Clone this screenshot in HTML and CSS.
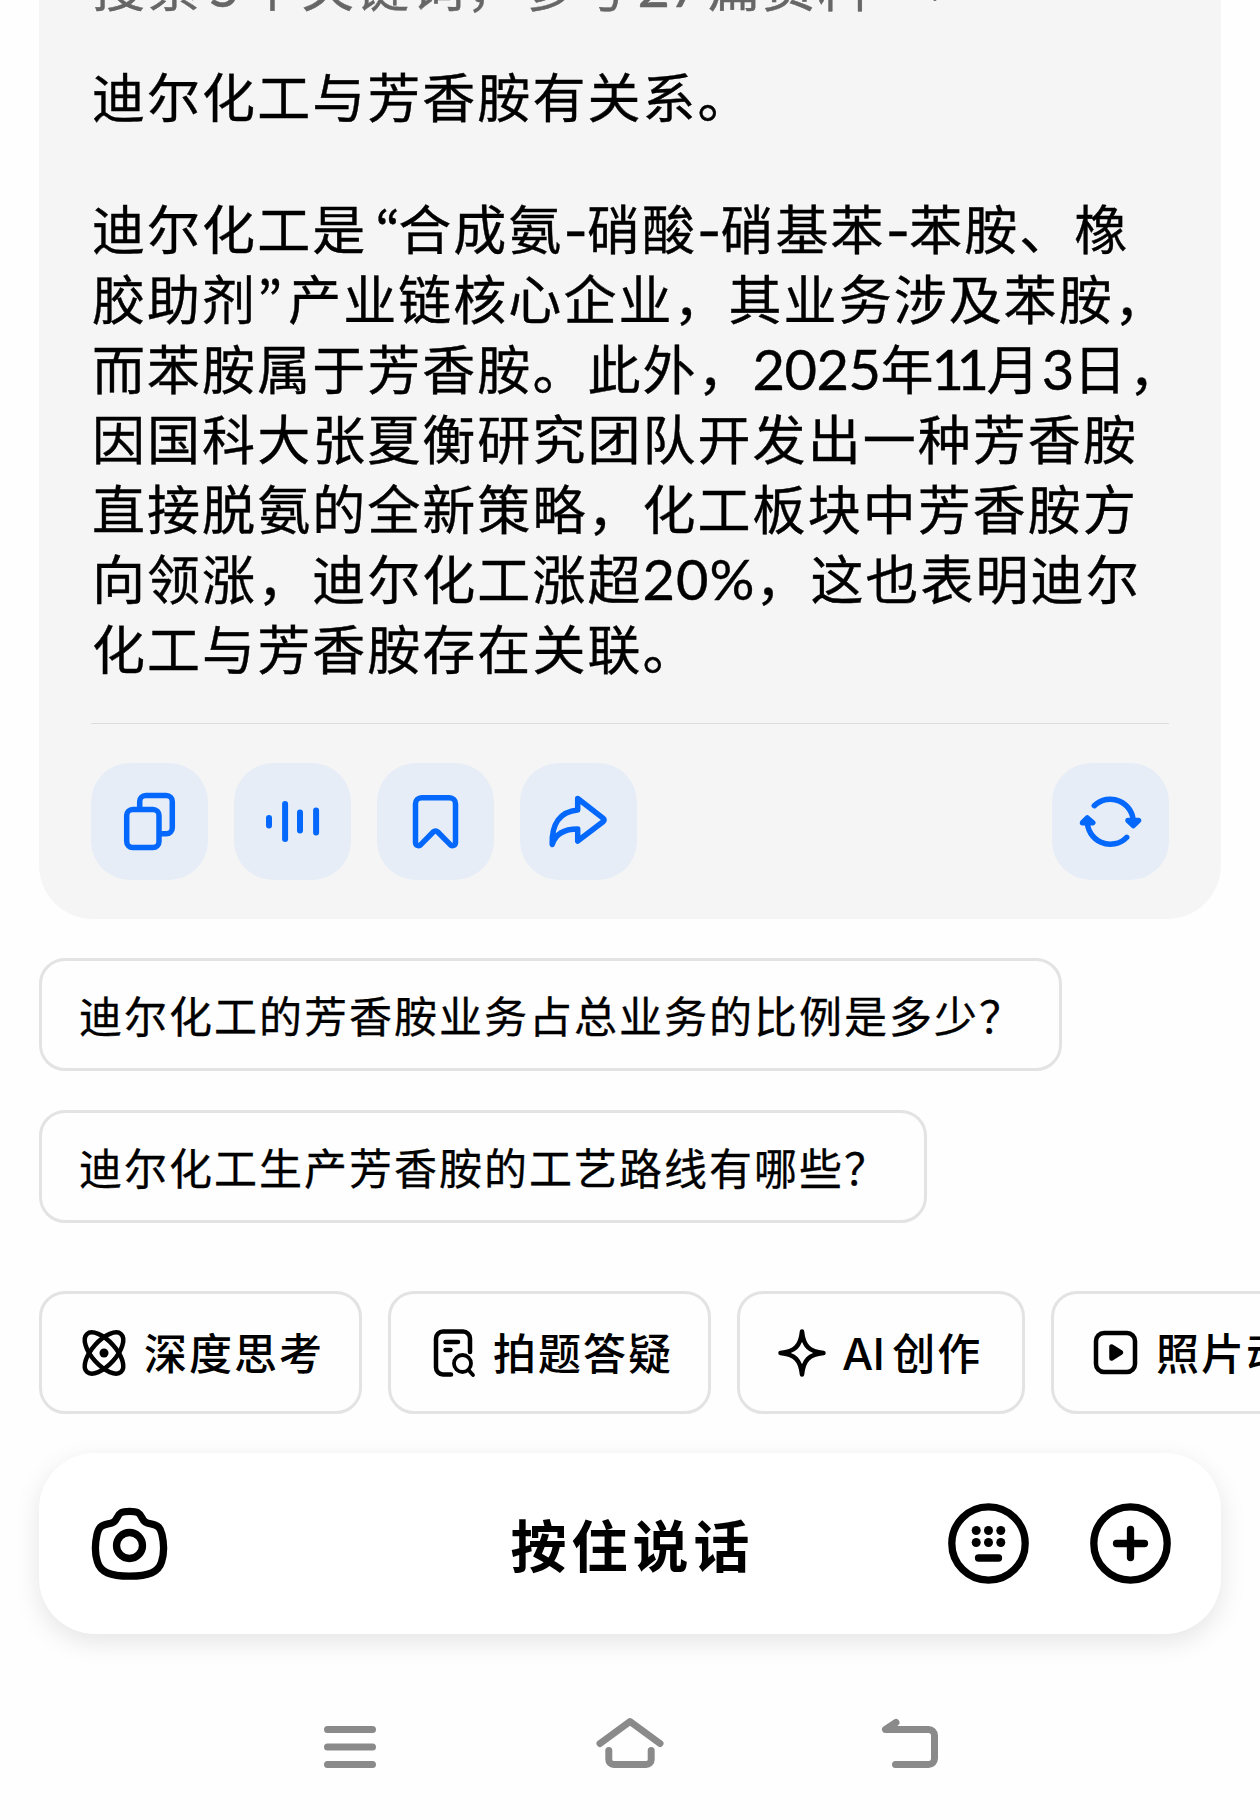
FILE: index.html
```html
<!DOCTYPE html>
<html lang="zh-CN">
<head>
	<meta charset="utf-8">
	<title>AI 对话</title>
	<link rel="stylesheet" href="styles.css">
</head>
<body>
	<div class="screen">
		<div class="answer">
			<div class="sources">
				<span>搜索<span class="num">5</span>个关键词，参考<span class="num">27</span>篇资料</span>
				<svg class="chevron" width="22" height="36" viewBox="0 0 22 36"><path d="M5 5l12 13L5 31"/></svg>
			</div>
			<p>迪尔化工与芳香胺有关系。</p>
			<p>
				<span class="line">迪尔化工是<span class="quote open">“</span>合成氨<span class="dash">-</span>硝酸<span class="dash">-</span>硝基苯<span class="dash">-</span>苯胺、橡</span>
				<span class="line">胶助剂<span class="quote">”</span>产业链核心企业，其业务涉及苯胺，</span>
				<span class="line">而苯胺属于芳香胺。此外，<span class="num">2025</span>年<span class="num ones">11</span>月<span class="num">3</span>日，</span>
				<span class="line">因国科大张夏衡研究团队开发出一种芳香胺</span>
				<span class="line">直接脱氨的全新策略，化工板块中芳香胺方</span>
				<span class="line">向领涨，迪尔化工涨超<span class="num percent">20%</span>，这也表明迪尔</span>
				<span class="line">化工与芳香胺存在关联。</span>
			</p>
			<div class="actions">
				<button>
					<svg viewBox="0 0 117 117"><rect x="35.7" y="46.5" width="32.3" height="38" rx="6"/><path d="M48.7 46v-7.5a6 6 0 0 1 6-6h20.6a6 6 0 0 1 6 6v26.3a6 6 0 0 1-6 6H69"/></svg>
				</button>
				<button>
					<svg class="wave" viewBox="0 0 117 117"><path d="M35 55v7.5M51.100 41v35M66 49.500v18M82.100 47.500v22"/></svg>
				</button>
				<button>
					<svg viewBox="0 0 117 117"><path d="M44.500 34.700h28a6 6 0 0 1 6 6v38.500c0 3.500-3.500 4.500-5.500 2.200L60.800 69c-1.400-1.400-3.200-1.400-4.600 0L44 81.400c-2 2.300-5.500 1.300-5.500-2.200V40.700a6 6 0 0 1 6-6z"/></svg>
				</button>
				<button>
					<svg viewBox="0 0 117 117"><path d="M57.700 35.500L83 55.200q2.200 1.800 0 3.600L57.700 78V66C47 66 36 69 32.200 81.500 31.500 61 40 48.500 57.700 47z"/></svg>
				</button>
				<button class="refresh">
					<svg viewBox="0 0 117 117"><path d="M42.300 42.700A23 23 0 0 1 81.300 60M74.700 74.300A23 23 0 0 1 35.300 57"/><path class="solid" d="M76 57.500l5.300 5L86.500 57.500zM30.500 59.800l4.800-4.800L40.800 59.800z"/></svg>
				</button>
			</div>
		</div>

		<div class="suggestions">
			<div class="suggestion">迪尔化工的芳香胺业务占总业务的比例是多少？</div>
			<div class="suggestion">迪尔化工生产芳香胺的工艺路线有哪些？</div>
		</div>

		<div class="tools">
			<div class="tool">
				<svg width="50" height="50" viewBox="0 0 50 50"><ellipse cx="25" cy="25" rx="12" ry="25.500" transform="rotate(42 25 25)"/><ellipse cx="25" cy="25" rx="12" ry="25.500" transform="rotate(-42 25 25)"/><circle class="dot" cx="25" cy="25" r="4.500"/></svg>
				<span>深度思考</span>
			</div>
			<div class="tool">
				<svg width="50" height="50" viewBox="0 0 50 50"><path d="M23 46.500h-8a7 7 0 0 1-7-7v-29a7 7 0 0 1 7-7h20a7 7 0 0 1 7 7V24M17.500 14h12.500M17.500 22h5"/><circle cx="34.500" cy="35.500" r="8.500" stroke-width="3.800"/><path d="M40.500 42l4.500 5" stroke-width="3.800"/></svg>
				<span>拍题答疑</span>
			</div>
			<div class="tool ai">
				<svg width="50" height="50" viewBox="0 0 50 50"><path d="M25 3.500C26.500 18 32 23.500 46.500 25 32 26.500 26.500 32 25 46.500 23.500 32 18 26.500 3.500 25 18 23.500 23.500 18 25 3.500z"/></svg>
				<span><span class="latin">AI</span>创作</span>
			</div>
			<div class="tool">
				<svg width="50" height="50" viewBox="0 0 50 50"><rect x="5" y="5" width="39" height="39" rx="8"/><path class="fill" d="M20.500 18.500v12L30 24.500z"/></svg>
				<span>照片动起来</span>
			</div>
		</div>

		<div class="voice-bar">
			<svg class="camera" width="77" height="81" viewBox="0 0 77 81"><path d="M38.500 8.300c8 0 10 1.500 12.200 6 2.300 4.500 4 5.700 9.300 6.500 7.500 1.200 9.500 4.500 11 10.700 2 9 2 20-.5 27.500C67.500 69 58 73.200 38.500 73.200S9.500 69 6.500 59C4 51.500 4 40.500 6 31.500c1.500-6.200 3.500-9.500 11-10.700 5.300-.8 7-2 9.300-6.500 2.200-4.500 4.200-6 12.200-6z"/><circle cx="38.500" cy="42.500" r="13"/></svg>
			<span class="hold">按住说话</span>
			<svg class="keyboard" width="81" height="81" viewBox="0 0 81 81"><circle cx="40.500" cy="40.500" r="36.700"/><g class="fill"><circle cx="28.200" cy="27.500" r="4.500"/><circle cx="40.500" cy="27.500" r="4.500"/><circle cx="52.800" cy="27.500" r="4.500"/><circle cx="28.200" cy="39.500" r="4.500"/><circle cx="40.500" cy="39.500" r="4.500"/><circle cx="52.800" cy="39.500" r="4.500"/></g><path d="M30.500 55h20"/></svg>
			<svg width="81" height="81" viewBox="0 0 81 81"><circle cx="40.500" cy="40.500" r="36.700"/><path d="M40.500 26.500v28M26.500 40.500h28"/></svg>
		</div>

		<div class="navbar">
			<svg width="70" height="60" viewBox="0 0 70 60"><path d="M12.500 14.500h45M12.500 32h45M12.500 49.500h45"/></svg>
			<svg width="70" height="60" viewBox="0 0 70 60"><path d="M5 28.500L35 6.500l30 22M13.800 35.500v9a5 5 0 0 0 5 5h32.400a5 5 0 0 0 5-5v-9"/></svg>
			<svg width="70" height="60" viewBox="0 0 70 60"><path d="M21 7.500L10.500 14.500h43a6 6 0 0 1 6 6v23a6 6 0 0 1-6 6h-33"/></svg>
		</div>
	</div>
</body>
</html>
```
FILE: styles.css
```css
* {
	box-sizing: border-box;
}
body {
	margin: 0;
	background-color: #fefefe;
	font-family: "Noto Sans CJK SC", sans-serif;
	color: #000;
}
.screen {
	width: 1260px;
	height: 1820px;
	overflow: hidden;
}
svg {
	flex: none;
	fill: none;
	stroke: #000;
	stroke-linecap: round;
	stroke-linejoin: round;
}
svg .fill {
	fill: #000;
}
svg .dot {
	fill: #000;
	stroke: none;
}

/* answer card */
.answer {
	height: 919px;
	margin: 0 39px;
	padding: 0 52px;
	background-color: #f5f5f5;
	border-radius: 0 0 54px 54px;
	font-size: 53px;
	line-height: 70px;
	letter-spacing: 2.05px;
	white-space: nowrap;
	-webkit-text-stroke: 0.4px;
}
.answer p {
	margin: 0 0 62px;
	padding-left: 1px;
}
.sources {
	display: flex;
	align-items: flex-end;
	height: 19px;
	margin-bottom: 41px;
	padding-left: 1px;
	color: #666;
}
.sources .num {
	margin: 0 6px;
}
.chevron {
	margin: 0 0 15px 57px;
	stroke: #666;
	stroke-width: 4;
}
.line {
	display: block;
	height: 70px;
}
.num {
	font-family: Lato, sans-serif;
	font-size: 56px;
	line-height: 1;
	letter-spacing: -0.5px;
}
.quote {
	display: inline-block;
	width: 31px;
	font-family: "Noto Sans CJK KR", sans-serif;
	letter-spacing: 0;
	line-height: 1;
}
.open {
	padding-left: 8px;
}
.dash {
	display: inline-block;
	width: 23.5px;
	font-family: Inter, sans-serif;
	line-height: 1;
	letter-spacing: 0;
}
.ones {
	margin: 0 5px 0 -4px;
	letter-spacing: -7.5px;
}
.percent {
	letter-spacing: 1px;
}
.answer p:nth-of-type(2) {
	margin: 0 0 0 0;
	height: 528px;
}
.actions {
	display: flex;
	gap: 26px;
	margin-top: 3px;
	padding-top: 39px;
	border-top: 1px solid #dcdcdc;
}
.actions button {
	width: 117px;
	height: 117px;
	padding: 0;
	border: none;
	border-radius: 39px;
	background-color: #e6edf7;
}
.actions svg {
	display: block;
	stroke: #0468fd;
	stroke-width: 5.5;
}
.actions .wave {
	stroke-width: 6;
}
.actions .refresh {
	margin-left: auto;
}
.actions .solid {
	fill: #0468fd;
}

/* follow-up questions */
.suggestions {
	display: flex;
	flex-direction: column;
	align-items: flex-start;
	gap: 39px;
	margin: 39px 39px 0;
}
.suggestion {
	height: 113px;
	padding: 0 35px 0 37px;
	border: 3px solid #e3e3e3;
	border-radius: 26px;
	font-size: 43px;
	line-height: 106px;
	letter-spacing: 2px;
	white-space: nowrap;
	-webkit-text-stroke: 0.3px;
}

/* tool chips */
.tools {
	display: flex;
	gap: 26px;
	margin: 68px 0 0 39px;
}
.tool {
	display: flex;
	flex: none;
	align-items: center;
	gap: 15px;
	height: 123px;
	padding: 0 35px 0 37px;
	border: 3px solid #e3e3e3;
	border-radius: 26px;
	font-size: 43px;
	font-weight: 500;
	line-height: 60px;
	letter-spacing: 2px;
	white-space: nowrap;
}
.tool > span {
	margin-top: -3px;
}
.tool svg {
	stroke-width: 4.5;
}
.ai {
	width: 288px;
}
.latin {
	margin-right: 8px;
	font-family: Inter, sans-serif;
	font-size: 44px;
	line-height: 1;
	letter-spacing: -0.5px;
}

/* voice input */
.voice-bar {
	display: flex;
	align-items: center;
	position: relative;
	height: 181px;
	margin: 39px 39px 0;
	padding: 0 50px 0 52px;
	background-color: #fff;
	border-radius: 56px;
	box-shadow: 0 8px 26px rgba(0, 0, 0, 0.1);
}
.voice-bar svg {
	stroke-width: 7.3;
}
.voice-bar .fill {
	stroke: none;
}
.hold {
	position: absolute;
	left: 5px;
	right: 0;
	top: 48px;
	line-height: 83px;
	text-align: center;
	font-size: 56px;
	font-weight: 700;
	letter-spacing: 5px;
}
.keyboard {
	margin: 0 61px 0 auto;
}

/* system navigation */
.navbar {
	display: flex;
	justify-content: center;
	gap: 210px;
	margin-top: 81px;
}
.navbar svg {
	stroke: #8a8a8a;
	stroke-width: 7;
}
```
